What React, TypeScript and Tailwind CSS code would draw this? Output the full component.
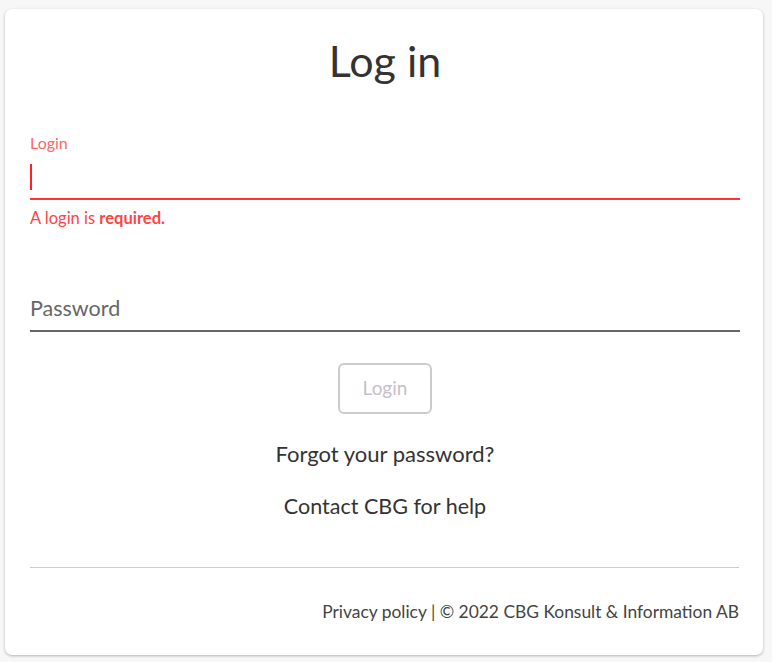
import React from "react";

const font = { fontFamily: "Lato, 'Open Sans', sans-serif" };

export default function App() {
  return (
    <div className="w-[772px] h-[662px] bg-[#f7f7f7] pl-[5px] pt-[9px]" style={font}>
      <div className="w-[758px] h-[646px] bg-white rounded-[7px] shadow-[0_1px_3px_rgba(0,0,0,0.28)] pl-[25px] pr-[23px] flex flex-col">
        <h1 className="text-center text-[43px] leading-[48px] text-[#333] mt-[28px]">Log in</h1>

        {/* login field, error state */}
        <div className="mt-[48px]">
          <label className="block text-[16px] leading-[20px] text-[#f66]">Login</label>
          <div className="h-[42px] mt-[3px] flex items-center">
            <span className="block w-[2px] h-[26px] bg-[#f22]" />
          </div>
          <div className="h-[2px] bg-[#f33]" />
          <p className="text-[16.5px] leading-[20px] text-[#f44] mt-[8px]">
            A login is <b className="font-bold">required.</b>
          </p>
        </div>

        {/* password field */}
        <div className="mt-[67px]">
          <div className="text-[21.5px] leading-[26px] text-[#666] pb-[9px]">Password</div>
          <div className="h-[2px] bg-[#666]" />
        </div>

        <div className="flex justify-center mt-[31px]">
          <button className="w-[94px] h-[51px] border-2 border-[#ccc] rounded-[6px] text-[19px] text-[#c8c0c8]">
            Login
          </button>
        </div>

        <div className="text-center text-[22px] text-[#333] mt-[27px] leading-[26px]">Forgot your password?</div>
        <div className="text-center text-[21.5px] text-[#333] mt-[26px] leading-[26px]">Contact CBG for help</div>

        <div className="h-px bg-[#ccc] mt-[48px] mr-px" />

        <div className="text-right text-[17.4px] text-[#444] mt-[33px] leading-[22px] pr-px">
          Privacy policy | © 2022 CBG Konsult &amp; Information AB
        </div>
      </div>
    </div>
  );
}
